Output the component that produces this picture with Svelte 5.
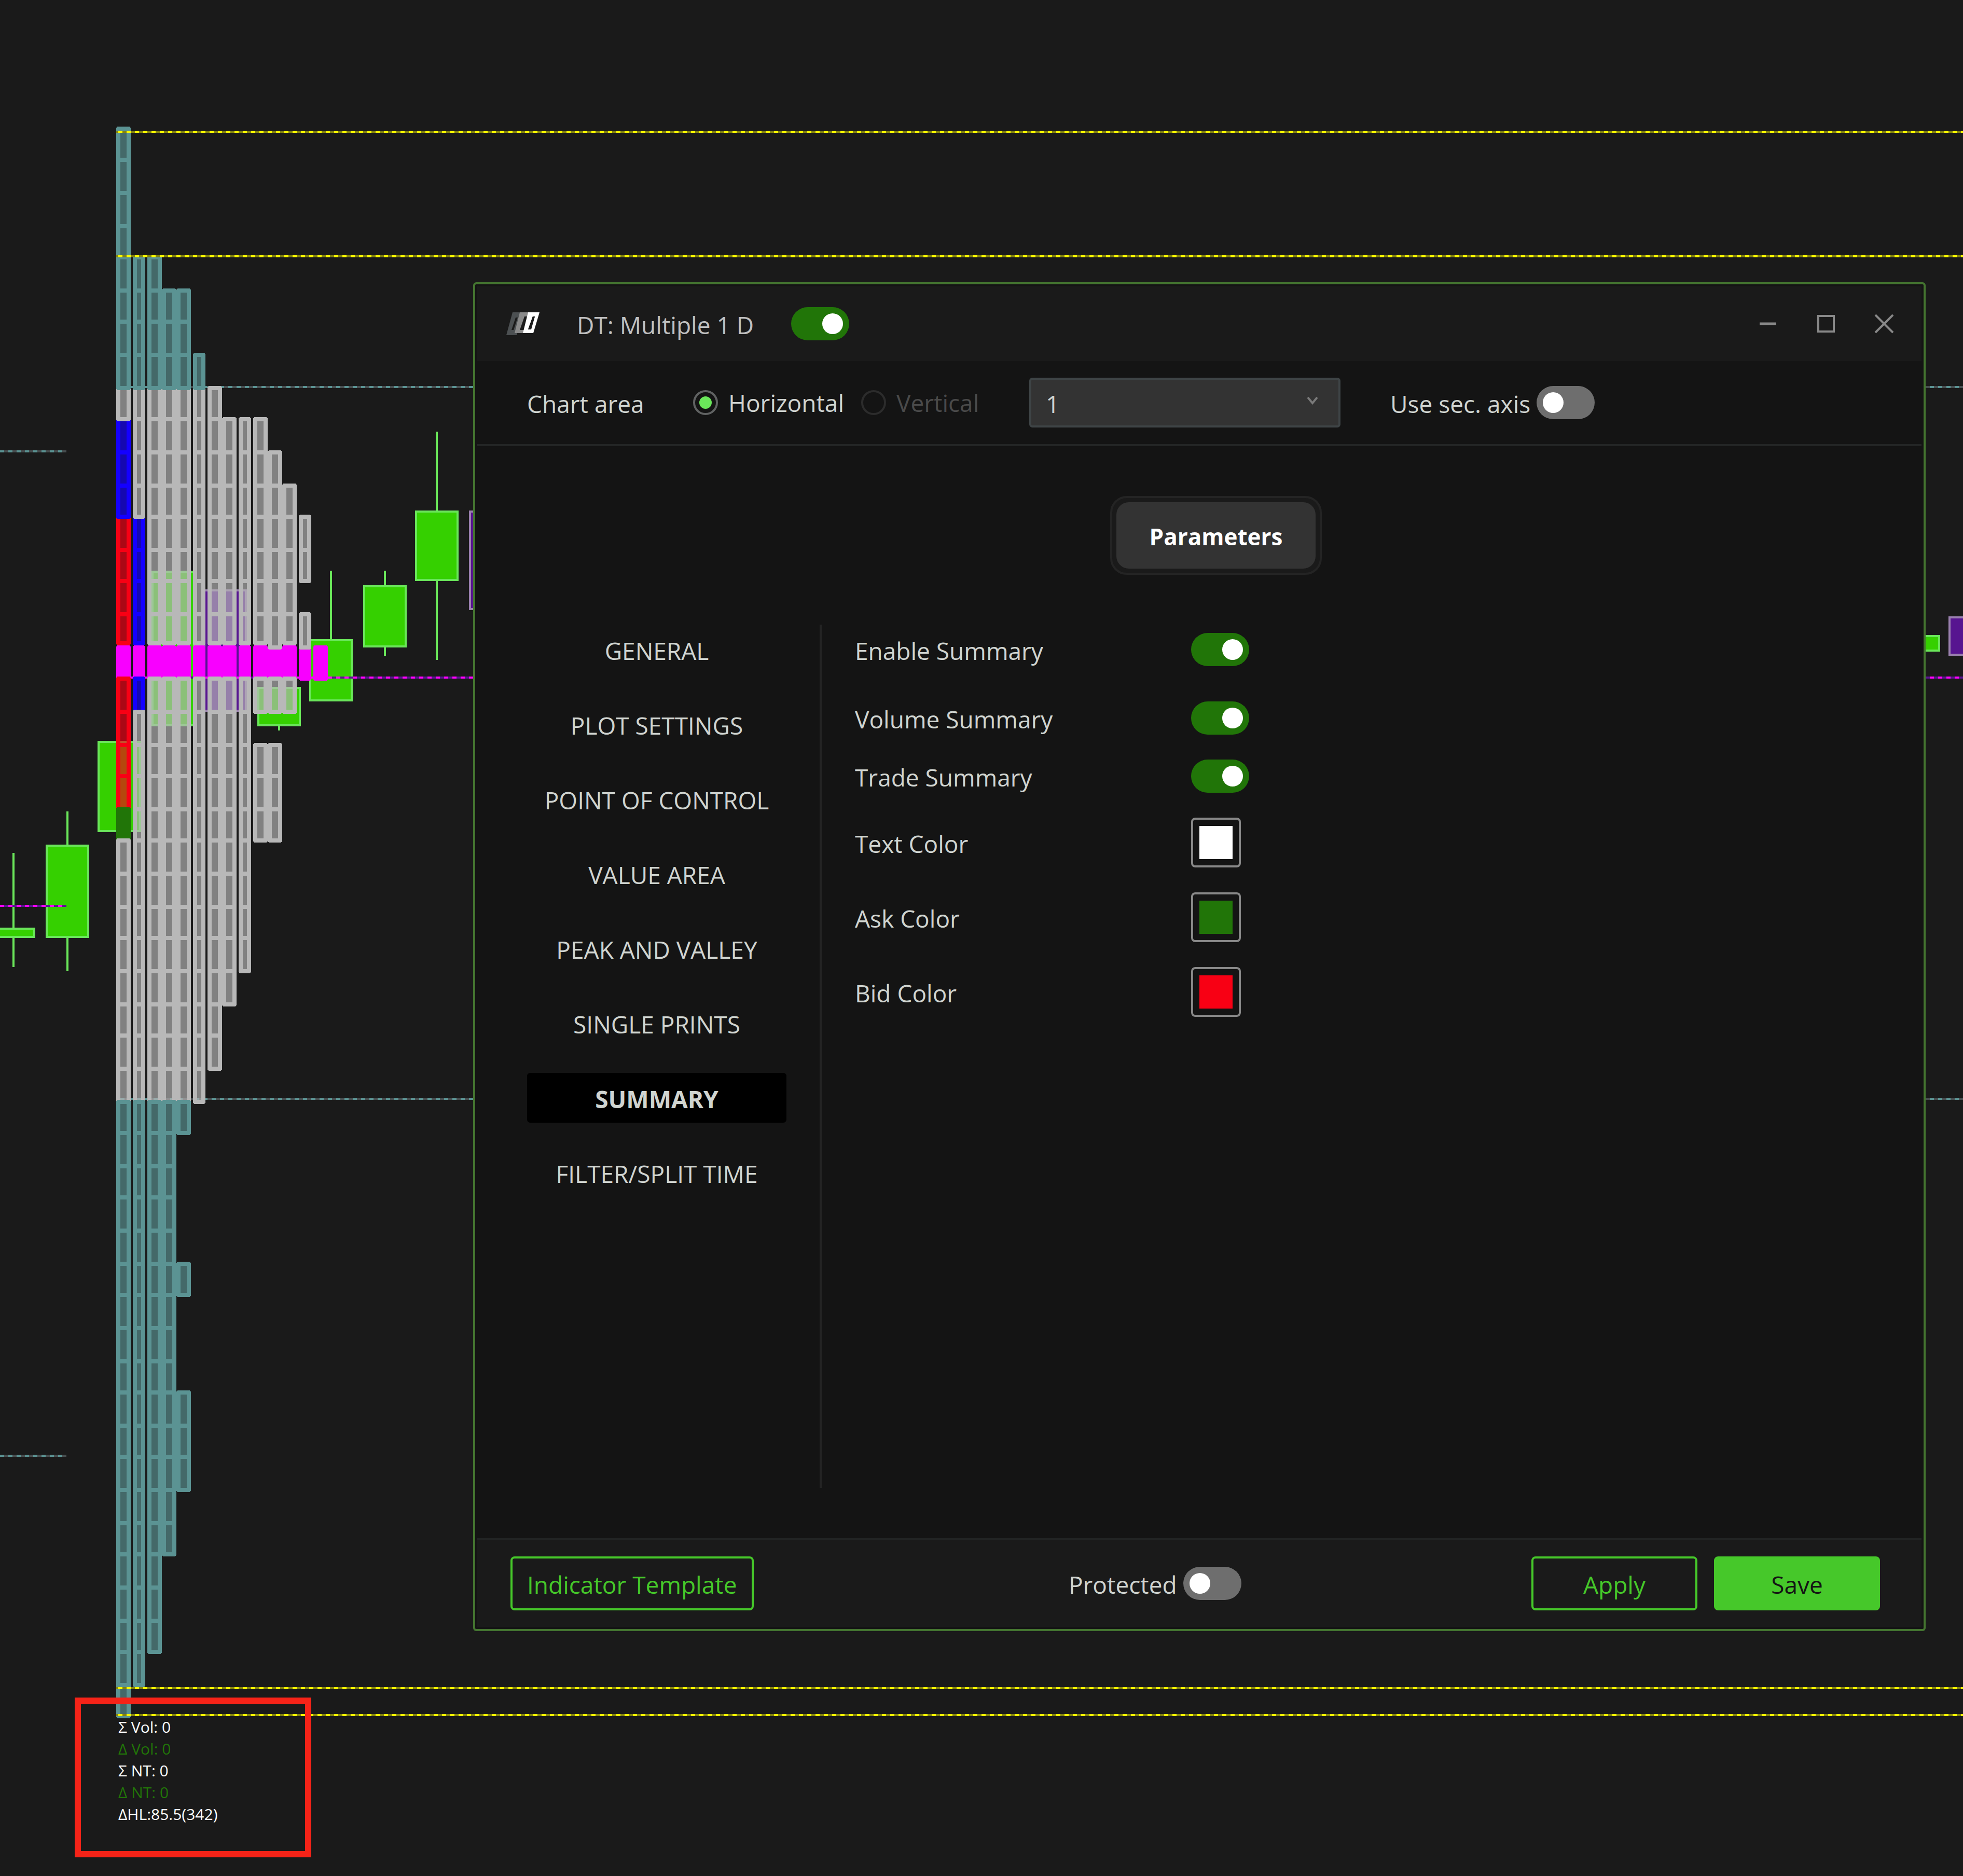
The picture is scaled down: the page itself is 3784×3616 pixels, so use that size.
<script>
  // Upper edge of every price row in the profile
  const rowTops = [
    252, 312, 376, 440, 500, 564, 624, 688, 752, 812, 876, 940, 1000, 1064, 1124, 1188, 1252,
    1312, 1376, 1440, 1500, 1564, 1624, 1688, 1752, 1812, 1876, 1940, 2000, 2064, 2128, 2188,
    2252, 2312, 2376, 2440, 2500, 2564, 2628, 2688, 2752, 2812, 2876, 2940, 3000, 3064, 3128,
    3188, 3252, 3312
  ];
  const pocRow = 16;

  // Time brackets: x, width and the row ranges that were traded
  const brackets = [
    { x: 224, w: 28, ranges: [[0, 48]] },
    { x: 256, w: 24, ranges: [[4, 47]] },
    { x: 284, w: 28, ranges: [[4, 46]] },
    { x: 312, w: 28, ranges: [[5, 43]] },
    { x: 340, w: 28, ranges: [[5, 30], [35, 35], [39, 41]] },
    { x: 372, w: 24, ranges: [[7, 29]] },
    { x: 400, w: 28, ranges: [[8, 28]] },
    { x: 428, w: 28, ranges: [[9, 26]] },
    { x: 460, w: 24, ranges: [[9, 25]] },
    { x: 488, w: 28, ranges: [[9, 17], [19, 21]] },
    { x: 516, w: 28, ranges: [[10, 17], [19, 21]] },
    { x: 544, w: 28, ranges: [[11, 17]] },
    { x: 576, w: 24, ranges: [[12, 13], [15, 16]] },
    { x: 604, w: 28, ranges: [[16, 16]] }
  ];

  function kindOf(col, row) {
    if (row === pocRow) return 'poc';
    if (col === 0) {
      if (row >= 9 && row <= 11) return 'initial';
      if (row >= 12 && row <= 20) return 'single';
      if (row === 21) return 'open';
    }
    if (col === 1 && row >= 12 && row <= 17) return 'initial';
    return row < 8 || row > 29 ? 'outer' : 'value';
  }

  // Cells are painted outward from the point of control
  const distance = (cell) => Math.abs(cell.row - pocRow);
  const cells = brackets
    .flatMap((b, col) =>
      b.ranges.flatMap(([from, to]) =>
        Array.from({ length: to - from + 1 }, (_, i) => {
          const row = from + i;
          const top = rowTops[row];
          const next = rowTops[row + 1];
          const trim = row === 15 && col !== 10 && col !== 12 ? 8 : 0;
          return { row, kind: kindOf(col, row), x: b.x, w: b.w, y: top - 8, h: next - top + 8 - trim };
        })
      )
    )
    .sort((a, b) => distance(a) - distance(b));

  const candles = [
    { x: -16, top: 1788, bottom: 1808, high: 1644, low: 1864 },
    { x: 88, top: 1628, bottom: 1808, high: 1564, low: 1872 },
    { x: 188, top: 1428, bottom: 1604, high: 1428, low: 1604 },
    { x: 292, top: 1100, bottom: 1400, high: 1100, low: 1400 },
    { x: 392, top: 1136, bottom: 1372, high: 1136, low: 1372, down: true },
    { x: 496, top: 1324, bottom: 1400, high: 1324, low: 1408 },
    { x: 596, top: 1232, bottom: 1352, high: 1100, low: 1352 },
    { x: 700, top: 1128, bottom: 1248, high: 1100, low: 1264 },
    { x: 800, top: 984, bottom: 1120, high: 832, low: 1272 },
    { x: 904, top: 984, bottom: 1176, high: 984, low: 1176, down: true },
    { x: 3656, top: 1224, bottom: 1256, high: 1224, low: 1256 },
    { x: 3756, top: 1188, bottom: 1264, high: 1188, low: 1264, down: true }
  ];

  const levels = [
    { kind: 'value', x1: 0, x2: '128', y: 870 },
    { kind: 'poc', x1: 0, x2: '128', y: 1746 },
    { kind: 'value', x1: 0, x2: '128', y: 2806 },
    { kind: 'value', x1: 232, x2: '100%', y: 746 },
    { kind: 'value', x1: 232, x2: '100%', y: 2118 },
    { kind: 'poc', x1: 232, x2: '100%', y: 1306 }
  ];
  const singles = [254, 494, 3254, 3306];

  const sections = [
    'GENERAL', 'PLOT SETTINGS', 'POINT OF CONTROL', 'VALUE AREA',
    'PEAK AND VALLEY', 'SINGLE PRINTS', 'SUMMARY', 'FILTER/SPLIT TIME'
  ];
  let section = $state('SUMMARY');
  let enabled = $state(true);
  let secondAxis = $state(false);
  let locked = $state(false);
  let orientation = $state('horizontal');
  let area = $state('1');

  const toggles = $state([
    { id: 'enable-summary', label: 'Enable Summary', on: true },
    { id: 'volume-summary', label: 'Volume Summary', on: true },
    { id: 'trade-summary', label: 'Trade Summary', on: true }
  ]);
  const colors = $state([
    { id: 'text-color', label: 'Text Color', value: '#ffffff' },
    { id: 'ask-color', label: 'Ask Color', value: '#217508' },
    { id: 'bid-color', label: 'Bid Color', value: '#f80014' }
  ]);
</script>

<main>
  <svg class="chart" aria-hidden="true">
    {#each candles as c}
      <g class={c.down ? 'candle down' : 'candle'}>
        <rect class="wick" x={c.x + 40} y={c.high} width="4" height={c.low - c.high} />
        <rect class="body" x={c.x + 2} y={c.top + 2} width="80" height={c.bottom - c.top - 4} />
      </g>
    {/each}
    {#each levels as l}
      <line class="level {l.kind} base" x1={l.x1} x2={l.x2} y1={l.y} y2={l.y} />
      <line class="level {l.kind} dash" x1={l.x1} x2={l.x2} y1={l.y} y2={l.y} />
    {/each}
    {#each cells as c}
      <g class="cell {c.kind}">
        <rect class="fill" x={c.x + 8} y={c.y + 8} width={c.w - 16} height={c.h - 16} />
        <rect class="edge" x={c.x + 4} y={c.y + 4} width={c.w - 8} height={c.h - 8} />
      </g>
    {/each}
    {#each singles as y}
      <line class="level single base" x1="224" x2="100%" y1={y} y2={y} />
      <line class="level single dash" x1="228" x2="100%" y1={y} y2={y} />
    {/each}
  </svg>

  <section class="totals" aria-label="Profile summary">
    <p>Σ Vol: 0</p>
    <p class="ask">Δ Vol: 0</p>
    <p>Σ NT: 0</p>
    <p class="ask">Δ NT: 0</p>
    <p>ΔHL:85.5(342)</p>
  </section>

  <div class="dialog" role="dialog" aria-labelledby="dialog-title">
    <header class="titlebar">
      <svg class="logo" viewBox="0 0 64 44" aria-hidden="true">
        <g fill-rule="evenodd">
          <path fill="#4c5052" d="M12 0H30L20 44H0ZM18 10L10 34H14L22 10Z" />
          <path fill="#8a8a8a" d="M26 0H48L36 40H16Z" />
          <path fill="#1a1a1a" d="M35 8H42L34 34H26Z" />
          <path fill="#ffffff" d="M42 0H64L52 40H32ZM51 8L42 33H47L55 8Z" />
          <path fill="#1a1a1a" d="M51 8H55L48 33H42Z" />
        </g>
      </svg>
      <h1 id="dialog-title">DT: Multiple 1 D</h1>
      <input class="switch" type="checkbox" aria-label="Indicator enabled" bind:checked={enabled} />
      <div class="window-buttons">
        <button type="button" aria-label="Minimize">
          <svg viewBox="0 0 40 40"><path d="M4 20H36" stroke-width="5" /></svg>
        </button>
        <button type="button" aria-label="Maximize">
          <svg viewBox="0 0 40 40"><rect x="5" y="5" width="30" height="30" stroke-width="4" /></svg>
        </button>
        <button type="button" aria-label="Close">
          <svg viewBox="0 0 40 40"><path d="M3 3L37 37M37 3L3 37" stroke-width="4" /></svg>
        </button>
      </div>
    </header>

    <div class="toolbar">
      <span class="caption">Chart area</span>
      <label class="option">
        <input type="radio" name="orientation" value="horizontal" bind:group={orientation} />
        Horizontal
      </label>
      <label class="option disabled">
        <input type="radio" name="orientation" value="vertical" disabled bind:group={orientation} />
        Vertical
      </label>
      <div class="picker">
        <select aria-label="Chart area number" bind:value={area}>
          <option value="1">1</option>
          <option value="2">2</option>
        </select>
        <svg viewBox="0 0 24 16" aria-hidden="true"><path d="M3 2L12 13L21 2" /></svg>
      </div>
      <label class="inline">
        <span>Use sec. axis</span>
        <input class="switch" type="checkbox" bind:checked={secondAxis} />
      </label>
    </div>

    <div class="content">
      <div class="tabs"><button type="button" class="tab">Parameters</button></div>
      <div class="panes">
        <nav aria-label="Settings sections">
          {#each sections as name}
            <button type="button" class:active={name === section} onclick={() => (section = name)}>
              {name}
            </button>
          {/each}
        </nav>
        <form class="settings">
          {#each toggles as t}
            <div class="row toggle">
              <label for={t.id}>{t.label}</label>
              <input class="switch" id={t.id} type="checkbox" bind:checked={t.on} />
            </div>
          {/each}
          {#each colors as c}
            <div class="row color">
              <label for={c.id}>{c.label}</label>
              <input class="swatch" id={c.id} type="color" bind:value={c.value} />
            </div>
          {/each}
        </form>
      </div>
    </div>

    <footer>
      <button type="button" class="action template">Indicator Template</button>
      <label class="inline guard">
        <span>Protected</span>
        <input class="switch" type="checkbox" bind:checked={locked} />
      </label>
      <div class="confirm">
        <button type="button" class="action">Apply</button>
        <button type="button" class="action primary">Save</button>
      </div>
    </footer>
  </div>
</main>

<style>
  :global(body) {
    margin: 0;
    background: #1a1a1a;
  }

  main {
    position: relative;
    min-height: 100vh;
    overflow: hidden;
    background: #1a1a1a;
    color: #d0d4d0;
    font: 46px/64px 'Open Sans', 'Noto Sans', sans-serif;
  }

  *,
  *::before {
    box-sizing: border-box;
  }

  button,
  input,
  select {
    margin: 0;
    padding: 0;
    color: inherit;
    font: inherit;
  }

  /* Chart */
  .chart {
    position: absolute;
    inset: 0;
    width: 100%;
    height: 100%;
    shape-rendering: crispEdges;
  }

  .candle .wick { fill: #6ae65a; }
  .candle .body { fill: #35d000; stroke: #6ae65a; stroke-width: 4; }
  .candle.down .wick { fill: #9a80ae; }
  .candle.down .body { fill: #571590; stroke: #9a80ae; }

  .level { stroke-width: 4; }
  .level.dash { stroke-dasharray: 8 8; }
  .level.value.base { stroke: #484e50; }
  .level.value.dash { stroke: #5b9393; }
  .level.poc.base { stroke: #5a1590; }
  .level.poc.dash { stroke: #ff00ff; }
  .level.single.base { stroke: #838310; }
  .level.single.dash { stroke: #ffff00; }

  .cell .fill { fill-opacity: 0.66; }
  .cell .edge { fill: none; stroke-width: 8; stroke-linejoin: round; }
  .cell.outer .fill { fill: #5b9393; }
  .cell.outer .edge { stroke: #5b9393; }
  .cell.value .fill { fill: #b8b8b8; }
  .cell.value .edge { stroke: #b8b8b8; }
  .cell.initial .fill { fill: #1400ff; }
  .cell.initial .edge { stroke: #1400ff; }
  .cell.single .fill { fill: #f80014; }
  .cell.single .edge { stroke: #f80014; }
  .cell.open .fill { fill: #217508; fill-opacity: 1; }
  .cell.open .edge { stroke: #217508; }
  .cell.poc .fill { fill: #f800ff; fill-opacity: 1; }
  .cell.poc .edge { stroke: #f800ff; }

  .totals {
    position: absolute;
    top: 3272px;
    left: 144px;
    width: 456px;
    height: 308px;
    padding: 24px 0 0 72px;
    border: 12px solid #f62318;
    color: #ffffff;
    font-size: 30px;
    line-height: 42px;
  }

  .totals p { margin: 0; white-space: nowrap; }
  .totals .ask { color: #217508; }

  /* Dialog */
  .dialog {
    position: absolute;
    top: 544px;
    left: 912px;
    right: 72px;
    padding: 4px;
    border: 4px solid #447530;
    border-radius: 6px;
    background: #141414;
  }

  .titlebar {
    display: flex;
    align-items: center;
    height: 144px;
    padding: 0 52px 0 56px;
    background: #1a1a1a;
    color: #c0c0c0;
  }

  .logo { width: 64px; height: 44px; margin-right: 72px; }

  h1 { margin: 0 72px 0 0; padding-top: 4px; font: inherit; }

  .switch {
    appearance: none;
    flex: none;
    display: flex;
    align-items: center;
    width: 112px;
    height: 64px;
    padding: 0 12px;
    border-radius: 32px;
    background: #6e6e6e;
  }

  .switch::before {
    content: '';
    width: 40px;
    height: 40px;
    border-radius: 50%;
    background: #ffffff;
  }

  .switch:checked { justify-content: flex-end; background: #217508; }

  .window-buttons { display: flex; gap: 72px; margin-left: auto; }

  .window-buttons button {
    width: 40px;
    height: 40px;
    border: 0;
    background: none;
  }

  .window-buttons svg { display: block; fill: none; stroke: #888888; }

  .toolbar {
    display: flex;
    align-items: center;
    height: 164px;
    padding: 0 96px;
    border-bottom: 4px solid #242626;
  }

  .caption { width: 320px; padding-top: 4px; }

  .option { display: flex; align-items: center; gap: 20px; width: 324px; }
  .option.disabled { color: #4a4a4a; }

  .option input {
    appearance: none;
    display: grid;
    place-items: center;
    width: 48px;
    height: 48px;
    border: 4px solid #606262;
    border-radius: 50%;
  }

  .option input:checked::before {
    content: '';
    width: 24px;
    height: 24px;
    border-radius: 50%;
    background: #6ae65a;
  }

  .option input:disabled { border-color: #2c2c2c; }

  .picker { position: relative; width: 600px; margin-right: 96px; }

  .picker select {
    appearance: none;
    display: block;
    width: 100%;
    height: 96px;
    padding: 4px 28px 0;
    border: 4px solid #3e4446;
    border-radius: 6px;
    background: #333333;
  }

  .picker svg {
    position: absolute;
    top: 36px;
    right: 42px;
    width: 24px;
    height: 16px;
    fill: none;
    stroke: #7a7a7a;
    stroke-width: 4;
  }

  .inline { display: flex; align-items: center; gap: 12px; }
  .inline span { padding-top: 4px; }

  .content { padding: 96px 32px 96px 96px; }

  .tabs {
    width: fit-content;
    margin: 0 auto 96px;
    padding: 8px;
    border: 4px solid #242424;
    border-radius: 32px;
    background: #1a1a1a;
  }

  .tab {
    display: block;
    height: 128px;
    padding: 4px 64px 0;
    border: 0;
    border-radius: 24px;
    background: #333333;
    color: #ffffff;
    font-size: 44px;
    font-weight: 700;
  }

  .panes {
    display: grid;
    grid-template-columns: 568px 1fr;
    min-height: 1664px;
  }

  nav {
    display: flex;
    flex-direction: column;
    gap: 48px;
    padding-right: 64px;
    border-right: 4px solid #242424;
  }

  nav button {
    height: 96px;
    padding-top: 4px;
    border: 0;
    border-radius: 6px;
    background: none;
  }

  nav .active { background: #000000; font-weight: 700; }

  .settings { padding-left: 64px; }

  .row { display: grid; grid-template-columns: 648px auto; align-items: center; justify-content: start; }
  .row label { padding-top: 4px; }
  .row.toggle { height: 112px; }
  .row.toggle:first-child { height: 96px; margin-bottom: 28px; }
  .row.color { height: 144px; }

  .swatch {
    appearance: none;
    width: 96px;
    height: 96px;
    padding: 12px;
    border: 4px solid #888888;
    border-radius: 8px;
    background: none;
  }

  .swatch::-webkit-color-swatch-wrapper { padding: 0; }
  .swatch::-webkit-color-swatch { border: 0; border-radius: 0; }

  footer {
    display: flex;
    align-items: center;
    justify-content: space-between;
    height: 172px;
    padding: 0 80px 0 64px;
    border-top: 4px solid #222424;
    background: #1a1a1a;
  }

  .action {
    min-width: 320px;
    height: 104px;
    padding: 4px 28px 0;
    border: 4px solid #46c82a;
    border-radius: 8px;
    background: none;
    color: #46c82a;
  }

  .action.primary { background: #46c82a; color: #141414; }
  .guard { padding-left: 48px; }
  .confirm { display: flex; gap: 32px; }
</style>
